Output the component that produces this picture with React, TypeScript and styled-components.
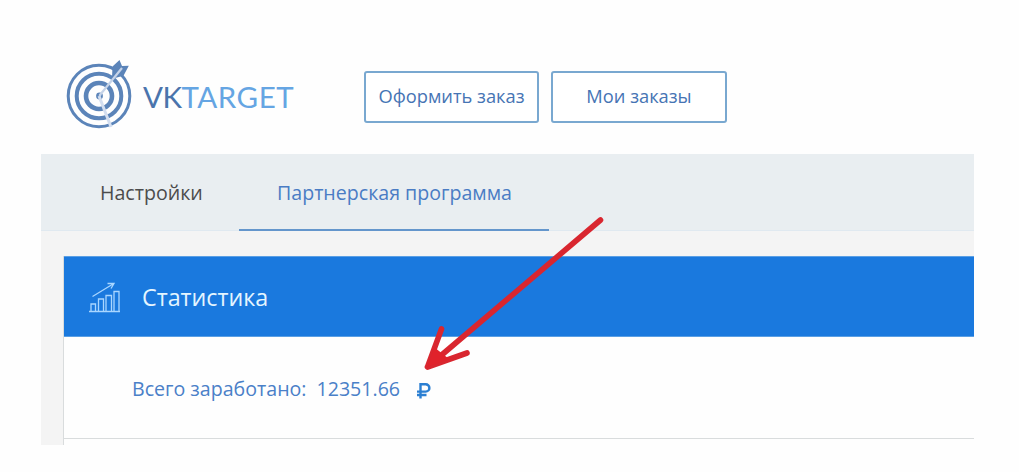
import React from "react";
import styled, { createGlobalStyle } from "styled-components";

const GlobalStyle = createGlobalStyle`
  * {
    box-sizing: border-box;
  }
  body {
    margin: 0;
    background: #fefefe;
    font-family: "Open Sans", "Noto Sans", sans-serif;
  }
`;

const Page = styled.div`
  position: relative;
  display: flex;
  flex-direction: column;
  width: 1019px;
  height: 472px;
  overflow: hidden;
  padding: 54px 45px 27px 41px;
`;

const Header = styled.header`
  display: flex;
  align-items: flex-start;
  height: 100px;
  padding-left: 24px;
`;

const Logo = styled.div`
  display: flex;
  width: 299px;
`;

const LogoName = styled.div`
  margin: 25px 0 0 8px;
  font-family: Lato, "Open Sans", sans-serif;
  font-size: 29.5px;
  line-height: 36px;
  letter-spacing: 0.5px;
  color: #65a5e3;
`;

const LogoStart = styled.span`
  letter-spacing: -0.5px;
  color: #4a74ac;
`;

const Buttons = styled.div`
  display: flex;
  gap: 12px;
  padding-top: 17px;
`;

const OrderButton = styled.button<{ $width: number }>`
  width: ${props => props.$width}px;
  height: 52px;
  padding: 0 0 3px;
  border: 2px solid #79a8d0;
  border-radius: 3px;
  background: #fff;
  color: #4674b4;
  font-family: inherit;
  font-size: 18.3px;
  white-space: nowrap;
`;

const Content = styled.main`
  flex: 1;
  display: flex;
  flex-direction: column;
  background: #f4f4f4;
`;

const Tabs = styled.nav`
  display: flex;
  height: 77px;
  padding-left: 22px;
  background: #e9eef1;
  border-bottom: 1px solid #e0e9f0;
`;

const Tab = styled.a<{ $active?: boolean }>`
  width: ${props => (props.$active ? 310 : 176)}px;
  height: 77px;
  padding: 0 ${props => (props.$active ? 38 : 37)}px;
  border-bottom: 2px solid ${props => (props.$active ? "#6496cc" : "transparent")};
  color: ${props => (props.$active ? "#4a7cc4" : "#4c4c4c")};
  font-size: 19.6px;
  line-height: 77px;
  white-space: nowrap;
`;

const Panel = styled.section`
  flex: 1;
  display: flex;
  flex-direction: column;
  margin: 25px 0 0 22px;
  border-left: 1px solid #d9dcdd;
  background: #fefefe;
`;

const PanelHeader = styled.div`
  display: flex;
  align-items: center;
  gap: 21px;
  height: 81px;
  padding-left: 25px;
  border: solid #5a9fe4;
  border-width: 1px 0;
  background: #1a79de;
  color: #e4f5ff;
  font-size: 23.3px;
`;

const Earned = styled.div`
  display: flex;
  align-items: center;
  height: 102px;
  padding: 2px 0 0 68px;
  border-bottom: 1px solid #d9dcdd;
  color: #4a80c8;
  font-size: 19.6px;
  white-space: nowrap;
`;

const Amount = styled.span`
  margin: 0 16px 0 10px;
`;

const Pointer = styled.svg`
  position: absolute;
  left: 410px;
  top: 205px;
`;

const Ruble = styled.svg`
  margin-top: 3px;
`;

const TargetIcon = () => (
  <svg width="70" height="78" viewBox="65 54 70 78" fill="none">
    <g stroke="#5b84b9">
      <circle cx="99" cy="96" r="30.8" strokeWidth="3" />
      <circle cx="99" cy="96" r="22.3" strokeWidth="4" />
      <circle cx="99" cy="96" r="13" strokeWidth="4.6" />
    </g>
    <circle cx="99.5" cy="96" r="3.4" fill="#5b84b9" />
    <path d="M99 96L111 127" stroke="#d3def0" strokeWidth="3" />
    <path d="M112 78l.5-11.5 7-6.500 2.500 6 6.800-.2-5.300 10-7.500 2z" fill="#5b84b9" />
    <path d="M99.5 95.5L122 68" stroke="#c5d3e8" strokeWidth="2.2" />
    <circle cx="100" cy="95.5" r="1.2" fill="#c5d5eb" />
  </svg>
);

const ChartIcon = () => (
  <svg width="32" height="32" viewBox="0 0 32 32" fill="none" stroke="#a9d6ff" strokeWidth="1.3">
    <path d="M0 30.5h31M2 30v-7h4.5v7M9.5 30V18h5v12M17 30V14.5h5.5V30M25 30V10.5h5V30" />
    <path d="M3.5 15.5L24 3M18.5 2.5H25l-3 5" />
  </svg>
);

const RubleIcon = () => (
  <Ruble width="16" height="17" viewBox="0 0 16 17" fill="none" stroke="#2b7fd2" strokeWidth="2.4">
    <path d="M4.5 16.5V2.200h5.200a3.700 3.700 0 0 1 0 7.400H1M1 13h9.500" />
  </Ruble>
);

const App: React.FC = () => {
  return (
    <Page>
      <GlobalStyle />
      <Header>
        <Logo>
          <TargetIcon />
          <LogoName>
            <LogoStart>VK</LogoStart>TARGET
          </LogoName>
        </Logo>
        <Buttons>
          <OrderButton $width={175}>Оформить заказ</OrderButton>
          <OrderButton $width={176}>Мои заказы</OrderButton>
        </Buttons>
      </Header>
      <Content>
        <Tabs>
          <Tab>Настройки</Tab>
          <Tab $active>Партнерская программа</Tab>
        </Tabs>
        <Panel>
          <PanelHeader>
            <ChartIcon />
            <span>Статистика</span>
          </PanelHeader>
          <Earned>
            <span>Всего заработано:</span>
            <Amount>12351.66</Amount>
            <RubleIcon />
          </Earned>
        </Panel>
      </Content>
      <Pointer width="200" height="170" viewBox="410 205 200 170" fill="none">
        <path
          d="M600.5 220L427.5 367M441.5 329L427.5 367L467 353"
          stroke="#d9262f"
          strokeWidth="5.6"
          strokeLinecap="round"
          strokeLinejoin="round"
        />
        <path d="M427.5 367L434 347L449 359z" fill="#e0222b" />
      </Pointer>
    </Page>
  );
};

export default App;
